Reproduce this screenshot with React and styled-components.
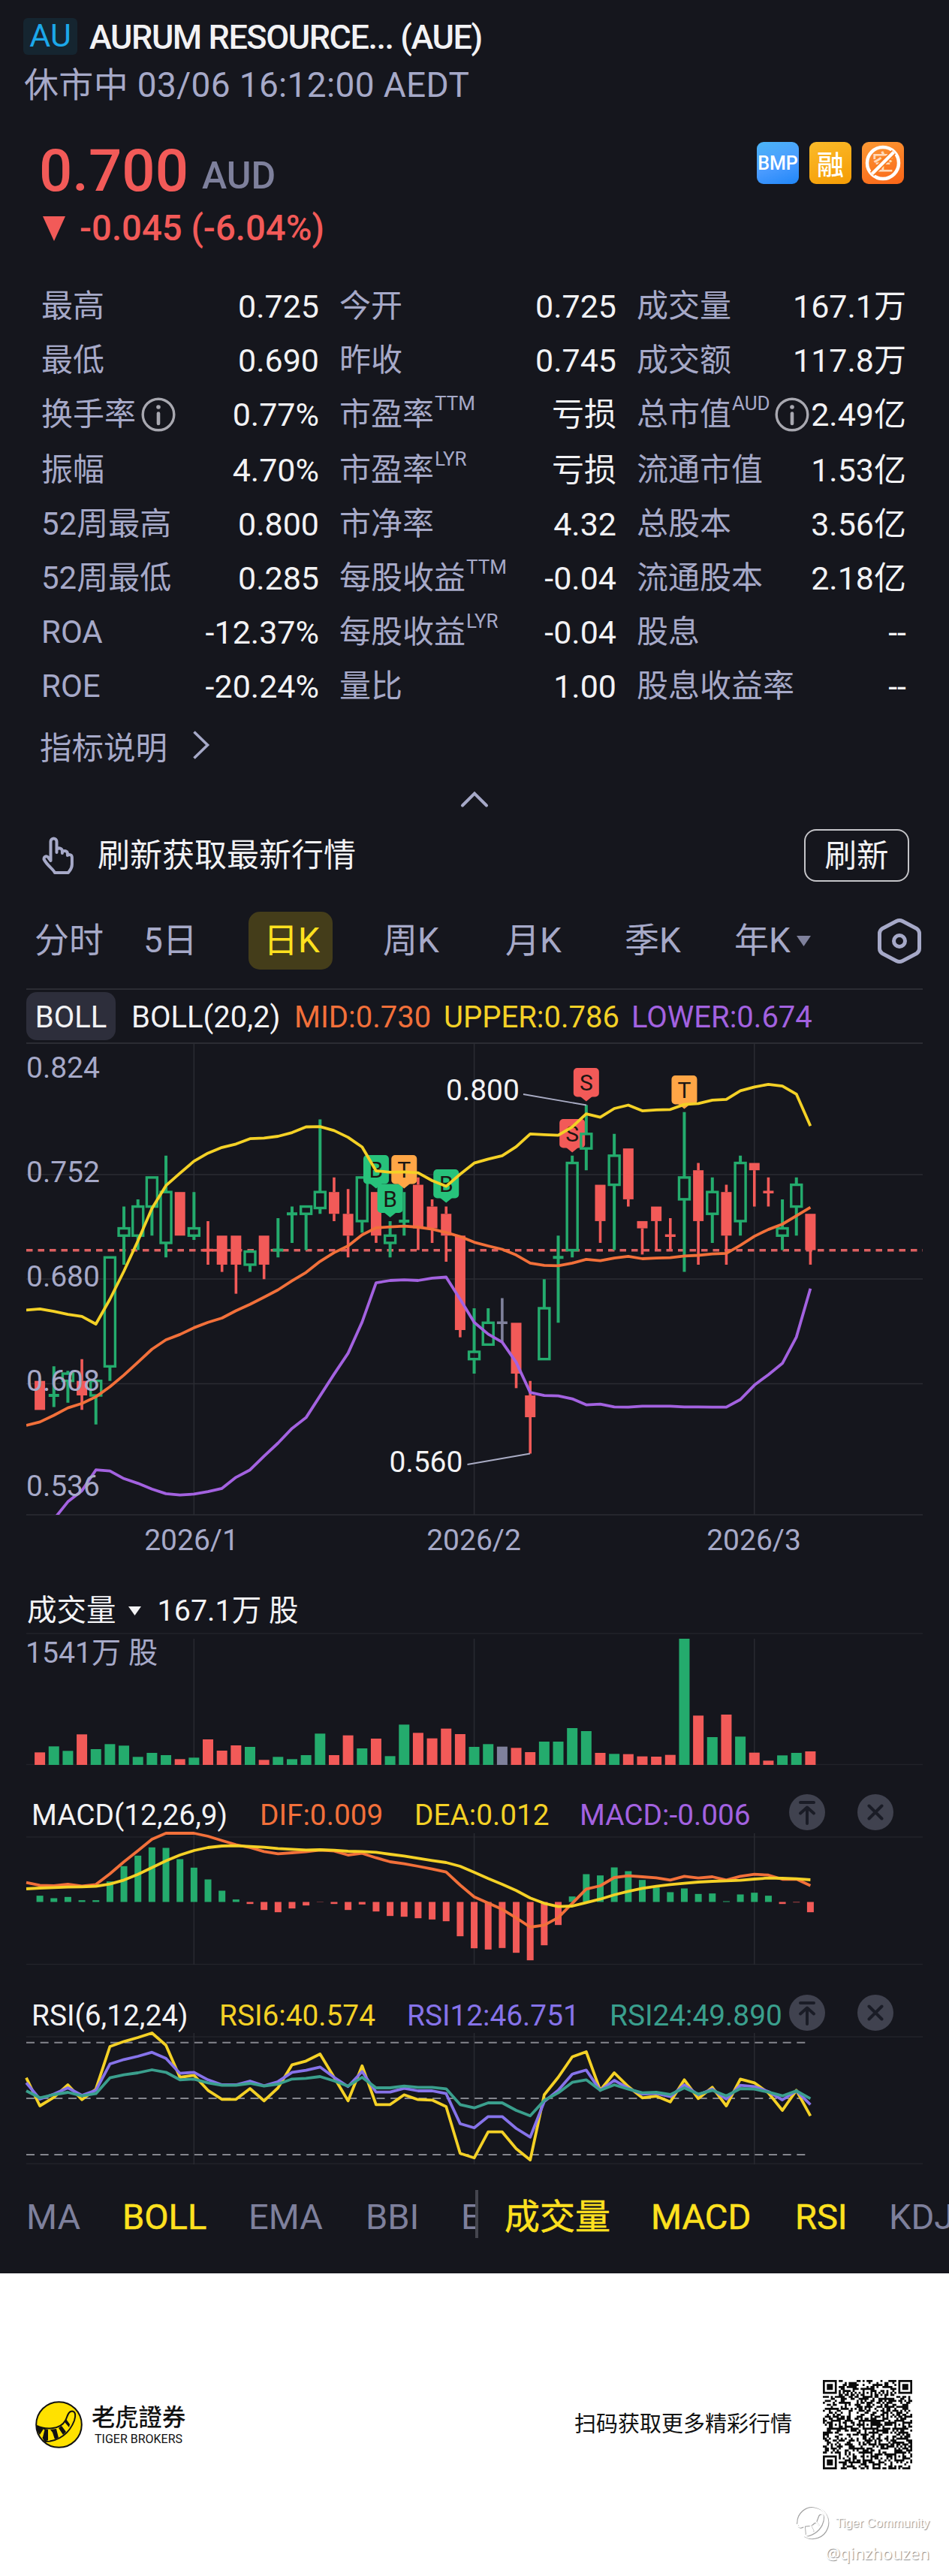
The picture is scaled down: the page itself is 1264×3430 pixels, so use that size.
import React from "react";
import styled, { createGlobalStyle } from "styled-components";

const C = {
  bg: "#15161d",
  white: "#f2f2f4",
  label: "#a6a9c8",
  muted: "#7e809c",
  red: "#f25a58",
  green: "#24ab6d",
  flat: "#7f819c",
  yellow: "#ffe11f",
  upper: "#f4d126",
  mid: "#f2703a",
  lower: "#a362e0",
  violet: "#8673ea",
  teal: "#3a9f8d",
  line: "#2b2c33",
  faint: "#22232a",
};

const Global = createGlobalStyle`
  * { box-sizing: border-box; }
  body { margin: 0; background: #fff; }
`;

const Page = styled.div`
  width: 1264px;
  height: 3430px;
  overflow: hidden;
  background: #fff;
  color: ${C.white};
  font-family: Roboto, "Noto Sans CJK SC", sans-serif;
  white-space: nowrap;
  svg { display: block; flex: none; }
`;

const Dark = styled.main`
  height: 3027px;
  background: ${C.bg};
  overflow: hidden;
`;

const Header = styled.header`
  padding: 24px 31px 0;
  height: 187px;
`;
const TitleRow = styled.div`
  display: flex;
  gap: 16px;
  line-height: 52px;
  height: 49px;
`;
const Market = styled.span`
  width: 72px;
  height: 49px;
  line-height: 47px;
  border-radius: 6px;
  background: #152530;
  color: #1ca8ea;
  font-size: 43px;
  text-align: center;
`;
const Title = styled.h1`
  margin: 0;
  font-size: 45px;
  font-weight: 500;
  letter-spacing: -1.45px;
`;
const Status = styled.div`
  margin-top: 12px;
  padding-left: 1px;
  line-height: 56px;
  font-size: 46px;
  letter-spacing: 0.35px;
  color: ${C.label};
`;

const Quote = styled.section`
  display: flex;
  justify-content: space-between;
  padding: 0 60px 0 52px;
  height: 184px;
`;
const PriceLine = styled.div`
  height: 80px;
  line-height: 82px;
  font-size: 78px;
  font-weight: 500;
  color: ${C.red};
`;
const Currency = styled.span`
  margin-left: 18px;
  font-size: 50px;
  line-height: 50px;
  vertical-align: 3px;
  color: ${C.muted};
`;
const Change = styled.div`
  display: flex;
  align-items: center;
  gap: 19px;
  margin-top: 8px;
  padding-left: 5px;
  line-height: 58px;
  font-size: 47.3px;
  font-weight: 500;
  color: ${C.red};
`;
const Tags = styled.div`
  display: flex;
  gap: 14px;
  padding-top: 2px;
`;
const Tag = styled.span`
  display: flex;
  align-items: center;
  justify-content: center;
  width: 56px;
  height: 56px;
  border-radius: 9px;
  font-size: ${(p) => p.$size}px;
  font-weight: 500;
  color: #fff;
  background: ${(p) => p.$bg};
`;

const Stats = styled.section`
  padding: 0 57px 0 55px;
`;
const StatRow = styled.div`
  display: grid;
  grid-template-columns: 370px 369px 359px;
  column-gap: 27px;
  height: ${(p) => (p.$tall ? 74 : 72)}px;
  align-items: center;
`;
const Stat = styled.div`
  display: flex;
  align-items: center;
  line-height: 74px;
`;
const StatName = styled.span`
  font-size: 42px;
  color: ${C.label};
`;
const Sup = styled.span`
  align-self: flex-start;
  margin: 7px 0 0 1px;
  line-height: 30px;
  font-size: 26px;
  color: ${C.label};
`;
const StatValue = styled.span`
  margin-left: auto;
  font-size: 43px;
`;
const InfoWrap = styled.i`
  margin-left: ${(p) => p.$gap}px;
  margin-right: -40px;
`;
const Explain = styled.div`
  display: flex;
  align-items: center;
  gap: 33px;
  height: 88px;
  padding: 0 0 2px 53px;
  font-size: 42.5px;
  color: ${C.label};
`;
const Collapse = styled.div`
  display: flex;
  justify-content: center;
  height: 67px;
  padding-top: 15px;
`;
const Refresh = styled.div`
  display: flex;
  align-items: center;
  height: 70px;
  padding: 0 53px 0 56px;
  font-size: 43px;
`;
const RefreshText = styled.span`
  margin-left: 32px;
  margin-right: auto;
  line-height: 72px;
`;
const RefreshButton = styled.button`
  width: 140px;
  height: 70px;
  padding: 0;
  border: 2px solid #c4c4c8;
  border-radius: 16px;
  background: transparent;
  color: ${C.white};
  font: inherit;
  font-size: 42.5px;
  line-height: 68px;
`;
const Tabs = styled.nav`
  display: grid;
  grid-template-columns: 145px 140px 179px 163px 159px 146px 190px 60px;
  align-items: center;
  height: 77px;
  margin: 40px 0 25px;
  padding-left: 46px;
`;
const Tab = styled.span`
  justify-self: start;
  display: flex;
  align-items: center;
  gap: 8px;
  height: 77px;
  padding: ${(p) => (p.$on ? "0 17px 0 20px" : "0")};
  border-radius: 15px;
  background: ${(p) => (p.$on ? "#443d1a" : "transparent")};
  color: ${(p) => (p.$on ? C.yellow : C.label)};
  font-size: 46px;
  line-height: 81px;
  width: ${(p) => (p.$on ? "112px" : "auto")};
`;
const Rule = styled.div`
  height: 2px;
  margin: 0 35px;
  background: ${C.line};
`;
const Spacer = styled.div`
  height: ${(p) => p.$h}px;
`;
const Legend = styled.div`
  display: grid;
  grid-template-columns: ${(p) => p.$cols};
  align-items: center;
  height: ${(p) => p.$h}px;
  padding-left: ${(p) => p.$left}px;
  font-size: ${(p) => p.$size}px;
`;
const LegendItem = styled.span`
  height: 52px;
  line-height: ${(p) => p.$lh || 59}px;
  color: ${(p) => p.$color || C.white};
`;
const Chip = styled.span`
  width: 119px;
  height: 64px;
  border-radius: 14px;
  background: #2d2e3b;
  line-height: 67px;
  text-align: center;
`;
const VolumeHead = styled.div`
  display: flex;
  align-items: center;
  height: 55px;
  margin-top: 34px;
  padding-left: 36px;
  font-size: 39.5px;
  line-height: 52px;
`;
const RoundButton = styled.span`
  display: flex;
  align-items: center;
  justify-content: center;
  width: 48px;
  height: 48px;
  border-radius: 50%;
  background: #40424f;
`;
const Indicators = styled.nav`
  display: flex;
  align-items: center;
  height: 64px;
  margin-top: 32px;
`;
const IndicatorList = styled.div`
  display: grid;
  grid-template-columns: ${(p) => p.$cols};
  width: ${(p) => p.$w}px;
  height: 64px;
  padding-left: ${(p) => p.$left}px;
  border-right: ${(p) => (p.$divider ? "4px solid #44454e" : "none")};
  overflow: hidden;
  font-size: 47px;
  line-height: 71px;
`;
const Indicator = styled.span`
  color: ${(p) => (p.$on ? C.yellow : C.muted)};
  -webkit-text-stroke: ${(p) => (p.$on ? "0.5px" : "0")};
`;

const Footer = styled.footer`
  color: #111;
`;
const Brand = styled.div`
  display: flex;
  align-items: center;
  height: 120px;
  margin-top: 141px;
  padding: 0 49px 0 47px;
`;
const BrandName = styled.div`
  margin: 0 auto 0 12px;
  padding-top: 4px;
`;
const BrandCn = styled.div`
  font-family: Roboto, "Noto Sans CJK TC", sans-serif;
  font-size: 31.3px;
  font-weight: 500;
  line-height: 34px;
`;
const BrandEn = styled.div`
  padding: 1px 0 0 4px;
  font-size: 16px;
  line-height: 20px;
`;
const ScanText = styled.span`
  margin-right: 41px;
  font-size: 29px;
  line-height: 62px;
`;
const Watermark = styled.div`
  display: flex;
  flex-direction: column;
  align-items: flex-end;
  margin-top: 48px;
  padding-right: 26px;
  color: #fff;
  text-shadow: 1px 1px 1px #8d8d8d;
`;
const WatermarkTop = styled.div`
  display: flex;
  align-items: center;
  gap: 8px;
  height: 46px;
  font-family: "Liberation Sans", Arial, sans-serif;
  font-size: 16.5px;
`;
const WatermarkUser = styled.div`
  font-family: "Noto Sans", sans-serif;
  font-size: 21.8px;
  line-height: 36px;
`;

/* ---------- icons ---------- */
const Info = () => (
  <svg width="46" height="46" viewBox="0 0 46 46" fill="none" stroke="#a8a8b0" strokeWidth="3.4">
    <circle cx="23" cy="23" r="20.8" />
    <path d="M23 21.5V35" strokeWidth="4.6" strokeLinecap="round" />
    <circle cx="23" cy="13" r="2.8" fill="#a8a8b0" stroke="none" />
  </svg>
);
const Hand = () => (
  <svg width="42" height="50" viewBox="0 0 42 50" fill="none" stroke={C.label} strokeWidth="4" strokeLinejoin="round" strokeLinecap="round">
    <path d="M11.5 32V6.5a4 4 0 0 1 8 0V21v-4c3-3 7-1.5 7.4 2v3-2c3-2 6.400-1 7 2v3c2.500-2 6-1 6 3v9c0 6-3 8-5 11H17c-2-5-10-9-14.500-18 0-4 4-5 6-2l3 4z" />
  </svg>
);
const Hex = () => (
  <svg width="60" height="62" viewBox="0 0 60 62" fill="none" stroke={C.label} strokeWidth="5" strokeLinejoin="round">
    <path d="M26 4.500 7 14.500Q3.500 17 3.500 21V41Q3.500 45 7 47.500L26 57.500Q30 59.500 34 57.500L53 47.500Q56.500 45 56.500 41V21Q56.500 17 53 14.500L34 4.500Q30 2.500 26 4.500Z" />
    <circle cx="30" cy="31" r="7.500" />
  </svg>
);
const Triangle = ({ w, h, color }) => (
  <svg width={w} height={h} viewBox="0 0 10 10" preserveAspectRatio="none">
    <path d="M0 0H10L5 10Z" fill={color} />
  </svg>
);
const UpIcon = () => (
  <svg width="32" height="34" viewBox="0 0 32 34" fill="none" stroke="#1a1c26" strokeWidth="4" strokeLinecap="round" strokeLinejoin="round">
    <path d="M7 4H25M16 32V11M7 18.500 16 10.500 25 18.500" />
  </svg>
);
const CloseIcon = () => (
  <svg width="22" height="22" viewBox="0 0 22 22" stroke="#1a1c26" strokeWidth="4" strokeLinecap="round">
    <path d="M2.500 2.500 19.500 19.500M19.500 2.500 2.500 19.500" />
  </svg>
);
const NoShort = () => (
  <svg width="56" height="56" viewBox="0 0 56 56" fill="none">
    <text x="28" y="38" fontSize="29" textAnchor="middle" fill="#ffd9b8" fontWeight="500">空</text>
    <circle cx="28" cy="28" r="21" stroke="#fff" strokeWidth="4.500" />
    <path d="M42.500 13.500 13.500 42.500" stroke="#f97a1c" strokeWidth="7.500" />
    <path d="M42.500 13.500 13.500 42.500" stroke="#fff" strokeWidth="4.500" />
  </svg>
);
const TigerLogo = () => (
  <svg width="63" height="63" viewBox="0 0 63 63">
    <circle cx="31.500" cy="31.500" r="30.300" fill="#ffe100" stroke="#111" strokeWidth="2" />
    <path d="M2 33C12 38 33 39 40 26 43 21 43 14 49 13.500 54 14 54 20 52 26 46 42 32 54 13 54" stroke="#111" fill="none" strokeWidth="2" />
    <path d="M1.500 33 11 36.500 17 38 17 52 12 54 9.500 49 11 37 6 45Q1.500 39 1.500 33Z" fill="#111" />
    <path d="M20 38 28 37 31 49 26 51 23 42Z M31 36 35 33 41 41 37 45Z M39 28 41 24 46 31 45 35Z" fill="#111" />
    <path d="M11.500 38 9 48 M18.500 39 18 53" stroke="#ffe100" strokeWidth="2" />
  </svg>
);
const WatermarkLogo = () => (
  <svg width="46" height="46" viewBox="0 0 46 46" fill="none" strokeLinecap="round">
    {[["#a4a4a4", 1], ["#fff", 0]].map(([s, o]) => (
      <g key={s} stroke={s} strokeWidth="1.700" transform={`translate(${o} ${o})`}>
        <path d="M1.500 23A21 21 0 1 1 12 40.500" />
        <path d="M3 26C5 31 9 28 12 27L13 38M12 27 20 26 24 34M22 25 27 21 32 27M28 20C30 14 31 10 35 11 39 13 37 20 35 25 30 35 20 40 12 40" />
      </g>
    ))}
  </svg>
);

/* ---------- QR code ---------- */
const QR_SIZE = 45;
const qrCells = (() => {
  const n = QR_SIZE;
  let seed = 90210;
  const rnd = () => ((seed = (seed * 1103515245 + 12345) % 2147483648) / 2147483648);
  const grid = Array.from({ length: n }, () => Array.from({ length: n }, () => rnd() > 0.5));
  const ring = (cx, cy, r, pattern) => {
    for (let y = -r; y <= r; y++)
      for (let x = -r; x <= r; x++) {
        const X = cx + x;
        const Y = cy + y;
        if (X >= 0 && Y >= 0 && X < n && Y < n) grid[Y][X] = pattern[Math.max(Math.abs(x), Math.abs(y))];
      }
  };
  for (let i = 8; i < n - 8; i++) grid[6][i] = grid[i][6] = i % 2 === 0;
  [[22, 6], [6, 22], [22, 22], [38, 22], [22, 38], [38, 38]].forEach(([x, y]) => ring(x, y, 2, [true, false, true]));
  [[3, 3], [n - 4, 3], [3, n - 4]].forEach(([x, y]) => ring(x, y, 4, [true, true, false, true, false]));
  return grid;
})();
const QR = () => (
  <svg width="119" height="119" viewBox={`0 0 ${QR_SIZE} ${QR_SIZE}`}>
    <path fill="#0b0b0b" d={qrCells.map((row, y) => row.map((on, x) => (on ? `M${x} ${y}h1.020v1.020h-1.020z` : "")).join("")).join("")} />
  </svg>
);

/* ---------- chart data ---------- */
const X = (i) => 53.1 + 18.66 * i;
const MONTHS = [11, 31, 51];

// [kind, high, body top, body bottom, low]
const CANDLES = [
  ["r", 0.61, 0.61, 0.59, 0.59], ["g", 0.62, 0.6, 0.6, 0.592], ["g", 0.617, 0.615, 0.61, 0.595], ["r", 0.625, 0.61, 0.6, 0.59],
  ["g", 0.61, 0.61, 0.6, 0.58], ["g", 0.695, 0.695, 0.62, 0.61], ["g", 0.73, 0.715, 0.71, 0.69], ["g", 0.735, 0.73, 0.71, 0.7],
  ["g", 0.75, 0.75, 0.73, 0.71], ["g", 0.765, 0.74, 0.705, 0.695], ["r", 0.74, 0.74, 0.71, 0.71], ["g", 0.74, 0.715, 0.71, 0.707],
  ["r", 0.72, 0.7, 0.7, 0.69], ["r", 0.71, 0.71, 0.69, 0.685], ["r", 0.71, 0.71, 0.69, 0.67], ["g", 0.7, 0.699, 0.69, 0.685],
  ["r", 0.71, 0.71, 0.69, 0.68], ["g", 0.722, 0.7, 0.7, 0.695], ["g", 0.73, 0.725, 0.725, 0.705], ["g", 0.73, 0.73, 0.725, 0.7],
  ["g", 0.79, 0.74, 0.729, 0.725], ["r", 0.75, 0.74, 0.725, 0.72], ["r", 0.742, 0.725, 0.71, 0.695], ["g", 0.75, 0.75, 0.72, 0.712],
  ["r", 0.74, 0.74, 0.71, 0.705], ["g", 0.72, 0.71, 0.705, 0.695], ["g", 0.74, 0.72, 0.72, 0.71], ["r", 0.75, 0.745, 0.715, 0.7],
  ["r", 0.735, 0.73, 0.715, 0.705], ["r", 0.73, 0.725, 0.71, 0.692], ["r", 0.71, 0.71, 0.645, 0.64], ["g", 0.66, 0.63, 0.625, 0.615],
  ["g", 0.66, 0.65, 0.635, 0.635], ["n", 0.667, 0.65, 0.65, 0.637], ["r", 0.65, 0.65, 0.615, 0.605], ["r", 0.61, 0.6, 0.585, 0.56],
  ["g", 0.68, 0.66, 0.625, 0.625], ["g", 0.71, 0.695, 0.695, 0.65], ["g", 0.765, 0.76, 0.7, 0.695], ["g", 0.8, 0.78, 0.77, 0.755],
  ["r", 0.745, 0.745, 0.72, 0.705], ["g", 0.78, 0.765, 0.745, 0.7], ["r", 0.77, 0.77, 0.735, 0.73], ["r", 0.72, 0.72, 0.715, 0.697],
  ["r", 0.73, 0.73, 0.72, 0.7], ["r", 0.722, 0.71, 0.71, 0.7], ["g", 0.795, 0.75, 0.735, 0.685], ["r", 0.76, 0.755, 0.72, 0.69],
  ["g", 0.75, 0.74, 0.725, 0.705], ["r", 0.745, 0.74, 0.71, 0.69], ["g", 0.765, 0.76, 0.72, 0.71], ["r", 0.76, 0.76, 0.755, 0.73],
  ["r", 0.75, 0.74, 0.74, 0.73], ["g", 0.735, 0.715, 0.71, 0.7], ["g", 0.75, 0.745, 0.73, 0.71], ["r", 0.725, 0.725, 0.7, 0.69],
];
const MARKS = {
  24: ["B", 150], 25: ["B", 188.5], 26: ["T", 150], 29: ["B", 169],
  38: ["S", 102], 39: ["S", 34], 46: ["T", 44],
};
const MARK_COLOR = { B: "#27c27b", T: "#ffa646", S: "#f25a58" };
const TONE = { r: C.red, g: C.green, n: C.flat };

const UPPER = [816, 813, 820, 829, 835, 858, 784, 700, 610, 513, 445, 408, 372, 348, 331, 321, 305, 303, 298, 287, 270, 269, 281, 301, 330, 401, 405, 404, 407, 430, 447, 411, 378, 366, 356, 329, 291, 293, 295, 270, 231, 241, 215, 205, 222, 219, 218, 203, 200, 190, 188, 162, 151, 143, 148, 172, 267];
const MID = [1160, 1150, 1130, 1108, 1095, 1075, 1045, 1010, 972, 933, 905, 889, 869, 853, 840, 818, 799, 778, 756, 729, 704, 671, 645, 625, 592, 571, 568, 566, 569, 575, 585, 597, 614, 625, 635, 652, 676, 683, 684, 676, 665, 669, 661, 656, 663, 661, 660, 655, 653, 649, 647, 623, 596, 576, 560, 535, 510];
const LOWER = [1540, 1490, 1440, 1388, 1355, 1293, 1296, 1319, 1333, 1350, 1364, 1368, 1365, 1358, 1348, 1315, 1293, 1252, 1213, 1169, 1137, 1072, 1007, 945, 852, 735, 728, 726, 728, 721, 718, 784, 853, 888, 912, 972, 1062, 1071, 1072, 1081, 1099, 1097, 1105, 1106, 1103, 1103, 1103, 1105, 1105, 1106, 1106, 1083, 1040, 1009, 975, 897, 752];

const VOLUME = [50, 74, 56, 122, 63, 83, 77, 32, 48, 39, 23, 29, 102, 57, 78, 72, 20, 32, 23, 39, 125, 39, 118, 66, 105, 35, 161, 128, 106, 145, 123, 72, 83, 73, 68, 51, 93, 93, 147, 135, 48, 44, 43, 34, 33, 40, 504, 197, 111, 201, 113, 49, 17, 38, 48, 54];

const MACD = [25, 15, 20, 7, 7, 82, 143, 185, 218, 216, 171, 137, 90, 45, 10, -8, -32, -41, -26, -14, -1, -8, -32, -10, -38, -56, -59, -65, -70, -77, -137, -185, -190, -184, -203, -233, -173, -92, 22, 111, 106, 138, 123, 88, 58, 39, 54, 32, 34, 3, 30, 37, 25, -8, -2, -41];
const DIF = [380, 391, 393, 387, 394, 388, 345, 297, 253, 207, 183, 183, 183, 195, 212, 229, 240, 256, 265, 261, 257, 250, 254, 270, 263, 281, 297, 305, 315, 326, 338, 390, 437, 462, 487, 521, 558, 550, 520, 463, 406, 393, 360, 353, 357, 361, 370, 355, 362, 357, 370, 355, 347, 350, 367, 366, 392];
const DEA = [405, 402, 400, 398, 397, 395, 386, 370, 347, 320, 293, 270, 252, 240, 234, 233, 236, 239, 244, 247, 250, 249, 251, 255, 256, 259, 267, 274, 283, 292, 300, 315, 339, 364, 387, 412, 442, 463, 476, 474, 460, 446, 429, 415, 403, 395, 388, 383, 378, 375, 373, 371, 366, 362, 363, 365, 369];

const RSI6 = [380, 492, 458, 408, 467, 425, 255, 235, 219, 201, 250, 378, 370, 430, 466, 466, 423, 472, 420, 328, 313, 285, 378, 472, 332, 487, 487, 448, 467, 469, 495, 682, 700, 596, 596, 663, 708, 448, 378, 296, 276, 430, 360, 415, 460, 453, 476, 388, 463, 418, 492, 385, 400, 440, 510, 430, 532];
const RSI12 = [400, 465, 445, 420, 450, 430, 325, 307, 294, 278, 302, 362, 358, 388, 408, 408, 393, 412, 395, 358, 350, 337, 378, 415, 355, 437, 437, 422, 432, 432, 443, 563, 580, 535, 535, 582, 617, 475, 430, 365, 349, 430, 390, 422, 445, 442, 455, 408, 448, 425, 465, 410, 415, 435, 468, 432, 487];
const RSI24 = [432, 460, 447, 438, 452, 443, 380, 368, 360, 348, 358, 388, 385, 400, 410, 410, 402, 413, 405, 385, 382, 375, 392, 413, 378, 420, 420, 413, 418, 418, 424, 487, 500, 480, 480, 510, 532, 470, 440, 398, 388, 430, 408, 425, 440, 438, 447, 420, 445, 430, 452, 423, 425, 437, 452, 432, 463];

const Series = ({ data, scale, offset, color, width = 3.8 }) => (
  <polyline
    fill="none"
    stroke={color}
    strokeWidth={width}
    strokeLinejoin="round"
    points={data.map((v, k) => `${k === 0 ? 35 : X(k - 1).toFixed(1)},${(v / scale + offset).toFixed(1)}`).join(" ")}
  />
);
const Months = ({ top, bottom, color = C.line }) =>
  MONTHS.map((m) => <path key={m} d={`M${X(m)} ${top}V${bottom}`} stroke={color} strokeWidth="1.500" />);
const HLine = ({ y, color = C.line }) => <path d={`M35 ${y}H1229`} stroke={color} strokeWidth="1.500" />;

const priceY = (p) => 176 - (p - 0.752) * 1934.4;

const Candle = ({ i, d: [kind, hi, top, bot, lo] }) => {
  const x = X(i);
  const color = TONE[kind];
  const yt = priceY(top);
  const yb = priceY(bot);
  const doji = top === bot;
  return (
    <g stroke={color} strokeWidth={kind === "g" ? 4 : 3.6} fill="none">
      {doji ? (
        <path d={`M${x} ${priceY(hi)}V${priceY(lo)}M${x - 7} ${yt}H${x + 7}`} />
      ) : (
        <path d={`M${x} ${priceY(hi)}V${yt}M${x} ${yb}V${priceY(lo)}`} />
      )}
      {!doji && kind === "r" && <rect x={x - 7} y={yt} width="14" height={yb - yt} fill={color} stroke="none" />}
      {!doji && kind === "g" && <rect x={x - 7} y={yt} width="14" height={Math.max(yb - yt, 5)} strokeWidth="3.400" />}
    </g>
  );
};
const Mark = ({ i, type, y }) => {
  const x = X(i);
  return (
    <g>
      <rect x={x - 17} y={y} width="34" height="38.500" rx="5" fill={MARK_COLOR[type]} />
      <path d={`M${x - 8} ${y + 38}h16l-8 6.500z`} fill={MARK_COLOR[type]} />
      <text x={x} y={y + 30} fontSize="30" textAnchor="middle" fill="#1b1613">{type}</text>
    </g>
  );
};

const PriceChart = () => (
  <svg width="1264" height="693" viewBox="0 2 1264 693">
    <clipPath id="plot"><rect x="35" y="0" width="1194" height="629" /></clipPath>
    <HLine y={176} />
    <HLine y={315} />
    <HLine y={454.500} />
    <HLine y={629} />
    <Months top={2} bottom={629} />
    <path d="M35 276.800H1229" stroke="#dd5f60" strokeWidth="3.600" strokeDasharray="8.500 7" clipPath="url(#plot)" />
    {CANDLES.map((d, i) => (
      <React.Fragment key={i}>
        <Candle i={i} d={d} />
        {MARKS[i] && <Mark i={i} type={MARKS[i][0]} y={MARKS[i][1]} />}
      </React.Fragment>
    ))}
    <g clipPath="url(#plot)">
      <Series data={UPPER} scale={2.24} offset={-8} color={C.upper} />
      <Series data={MID} scale={2.24} offset={-8} color={C.mid} />
      <Series data={LOWER} scale={2.24} offset={-8} color={C.lower} />
    </g>
    <g fontSize="39" fill={C.label}>
      {["0.824", "0.752", "0.680", "0.608", "0.536"].map((t, k) => (
        <text key={t} x="35" y={46.500 + k * 139.300}>{t}</text>
      ))}
      <text x="255" y="676" textAnchor="middle">2026/1</text>
      <text x="631" y="676" textAnchor="middle">2026/2</text>
      <text x="1004" y="676" textAnchor="middle">2026/3</text>
    </g>
    <g fontSize="39" fill={C.white}>
      <text x="594" y="77">0.800</text>
      <text x="518.500" y="572">0.560</text>
    </g>
    <path d="M697 69 781 83.500M622.500 562 706 547.500" stroke="#a9acc4" strokeWidth="1.800" />
  </svg>
);

const VolumeChart = () => (
  <svg width="1264" height="180" viewBox="0 0 1264 180">
    <HLine y={3} color={C.faint} />
    <HLine y={177.500} color={C.faint} />
    <Months top={10} bottom={178} color="#292a31" />
    {VOLUME.map((v, i) => (
      <rect key={i} x={X(i) - 7} y={178 - v / 3} width="14" height={v / 3} fill={TONE[CANDLES[i][0]]} />
    ))}
    <text x="34" y="42" fontSize="39.200" fill={C.label}>1541万 股</text>
  </svg>
);

const MacdChart = () => (
  <svg width="1264" height="182" viewBox="0 0 1264 182">
    <HLine y={8} color={C.faint} />
    <HLine y={177.500} color={C.faint} />
    <Months top={3} bottom={178} color="#292a31" />
    {MACD.map((v, i) => (
      <rect key={i} x={X(i) - 4.500} y={v > 0 ? 94.500 - v / 3 : 94.500} width="9" height={Math.abs(v) / 3} fill={v > 0 ? C.green : C.red} />
    ))}
    <Series data={DIF} scale={3} offset={-58} color={C.mid} />
    <Series data={DEA} scale={3} offset={-58} color={C.upper} />
  </svg>
);

const RsiChart = () => (
  <svg width="1264" height="180" viewBox="0 0 1264 180">
    <HLine y={8} color={C.faint} />
    <HLine y={177} color={C.faint} />
    <Months top={3} bottom={178} color="#292a31" />
    {[15.700, 90, 165].map((y) => (
      <path key={y} d={`M35 ${y}H1073`} stroke="#85868e" strokeWidth="2" strokeDasharray="11 7.660" />
    ))}
    <Series data={RSI6} scale={3} offset={-64} color={C.upper} />
    <Series data={RSI12} scale={3} offset={-64} color={C.violet} />
    <Series data={RSI24} scale={3} offset={-64} color={C.teal} />
  </svg>
);

const STATS = [
  [["最高", "0.725"], ["今开", "0.725"], ["成交量", "167.1万"]],
  [["最低", "0.690"], ["昨收", "0.745"], ["成交额", "117.8万"]],
  [["换手率", "0.77%", null, 7], ["市盈率", "亏损", "TTM"], ["总市值", "2.49亿", "AUD", 6]],
  [["振幅", "4.70%"], ["市盈率", "亏损", "LYR"], ["流通市值", "1.53亿"]],
  [["52周最高", "0.800"], ["市净率", "4.32"], ["总股本", "3.56亿"]],
  [["52周最低", "0.285"], ["每股收益", "-0.04", "TTM"], ["流通股本", "2.18亿"]],
  [["ROA", "-12.37%"], ["每股收益", "-0.04", "LYR"], ["股息", "--"]],
  [["ROE", "-20.24%"], ["量比", "1.00"], ["股息收益率", "--"]],
];

export default function App() {
  return (
    <Page>
      <Global />
      <Dark>
        <Header>
          <TitleRow>
            <Market>AU</Market>
            <Title>AURUM RESOURCE... (AUE)</Title>
          </TitleRow>
          <Status>休市中 03/06 16:12:00 AEDT</Status>
        </Header>

        <Quote>
          <div>
            <PriceLine>0.700<Currency>AUD</Currency></PriceLine>
            <Change><Triangle w={30} h={33} color={C.red} />-0.045 (-6.04%)</Change>
          </div>
          <Tags>
            <Tag $size={25} $bg="linear-gradient(160deg,#4bb4f6,#4a9bff 55%,#1f86f8)">BMP</Tag>
            <Tag $size={36} $bg="linear-gradient(160deg,#fbbb2a,#f59c05)">融</Tag>
            <Tag $size={30} $bg="linear-gradient(160deg,#fb9a35,#fb6417)"><NoShort /></Tag>
          </Tags>
        </Quote>

        <Stats>
          {STATS.map((row, r) => (
            <StatRow key={r} $tall={r === 2}>
              {row.map(([name, value, sup, info]) => (
                <Stat key={name}>
                  <StatName>{name}</StatName>
                  {sup && <Sup>{sup}</Sup>}
                  {info && <InfoWrap $gap={info}><Info /></InfoWrap>}
                  <StatValue>{value}</StatValue>
                </Stat>
              ))}
            </StatRow>
          ))}
        </Stats>

        <Explain>
          指标说明
          <svg width="24" height="38" viewBox="0 0 24 38" fill="none" stroke={C.label} strokeWidth="3.600">
            <path d="M2.500 1.500 20.500 19 2.500 36.500" />
          </svg>
        </Explain>
        <Collapse>
          <svg width="38" height="24" viewBox="0 0 38 24" fill="none" stroke={C.label} strokeWidth="4" strokeLinecap="round">
            <path d="M3 20.500 19 4.500 35 20.500" />
          </svg>
        </Collapse>

        <Refresh>
          <Hand />
          <RefreshText>刷新获取最新行情</RefreshText>
          <RefreshButton>刷新</RefreshButton>
        </Refresh>

        <Tabs>
          <Tab>分时</Tab>
          <Tab>5日</Tab>
          <Tab $on>日K</Tab>
          <Tab>周K</Tab>
          <Tab>月K</Tab>
          <Tab>季K</Tab>
          <Tab>年K<Triangle w={19} h={14} color={C.flat} /></Tab>
          <Hex />
        </Tabs>

        <Rule />
        <Legend $cols="140px 217px 199px 250px auto" $h={70} $left={35} $size={40}>
          <Chip>BOLL</Chip>
          <LegendItem $lh={55}>BOLL(20,2)</LegendItem>
          <LegendItem $lh={55} $color={C.mid}>MID:0.730</LegendItem>
          <LegendItem $lh={55} $color={C.upper}>UPPER:0.786</LegendItem>
          <LegendItem $lh={55} $color={C.lower}>LOWER:0.674</LegendItem>
        </Legend>
        <Rule />
        <PriceChart />

        <VolumeHead>
          成交量
          <svg width="55" height="12" viewBox="0 0 55 12"><path d="M16 0H33L24.500 12Z" fill={C.white} /></svg>
          167.1万 股
        </VolumeHead>
        <VolumeChart />

        <Spacer $h={35} />
        <Legend $cols="304px 206px 220px 279px 91px auto" $h={51} $left={42} $size={38.8}>
          <LegendItem>MACD(12,26,9)</LegendItem>
          <LegendItem $color={C.mid}>DIF:0.009</LegendItem>
          <LegendItem $color={C.upper}>DEA:0.012</LegendItem>
          <LegendItem $color={C.lower}>MACD:-0.006</LegendItem>
          <RoundButton><UpIcon /></RoundButton>
          <RoundButton><CloseIcon /></RoundButton>
        </Legend>
        <MacdChart />

        <Spacer $h={34} />
        <Legend $cols="250px 250px 270px 239px 91px auto" $h={50} $left={42} $size={38.8}>
          <LegendItem>RSI(6,12,24)</LegendItem>
          <LegendItem $color={C.upper}>RSI6:40.574</LegendItem>
          <LegendItem $color={C.violet}>RSI12:46.751</LegendItem>
          <LegendItem $color={C.teal}>RSI24:49.890</LegendItem>
          <RoundButton><UpIcon /></RoundButton>
          <RoundButton><CloseIcon /></RoundButton>
        </Legend>
        <RsiChart />

        <Indicators>
          <IndicatorList $w={637} $left={35} $divider $cols="128px 168px 156px 127px 100px">
            <Indicator>MA</Indicator>
            <Indicator $on>BOLL</Indicator>
            <Indicator>EMA</Indicator>
            <Indicator>BBI</Indicator>
            <Indicator>E</Indicator>
          </IndicatorList>
          <IndicatorList $w={627} $left={35} $cols="195px 192px 125px 120px">
            <Indicator $on>成交量</Indicator>
            <Indicator $on>MACD</Indicator>
            <Indicator $on>RSI</Indicator>
            <Indicator>KDJ</Indicator>
          </IndicatorList>
        </Indicators>
      </Dark>

      <Footer>
        <Brand>
          <TigerLogo />
          <BrandName>
            <BrandCn>老虎證券</BrandCn>
            <BrandEn>TIGER BROKERS</BrandEn>
          </BrandName>
          <ScanText>扫码获取更多精彩行情</ScanText>
          <QR />
        </Brand>
        <Watermark>
          <WatermarkTop><WatermarkLogo />Tiger Community</WatermarkTop>
          <WatermarkUser>@qinzhouzen</WatermarkUser>
        </Watermark>
      </Footer>
    </Page>
  );
}
